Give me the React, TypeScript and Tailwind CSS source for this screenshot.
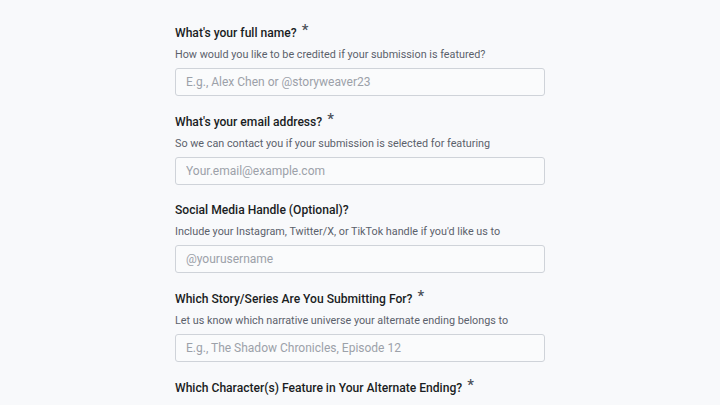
const fields = [
  {
    label: "What's your full name?",
    required: true,
    hint: "How would you like to be credited if your submission is featured?",
    placeholder: "E.g., Alex Chen or @storyweaver23",
  },
  {
    label: "What's your email address?",
    required: true,
    hint: "So we can contact you if your submission is selected for featuring",
    placeholder: "Your.email@example.com",
  },
  {
    label: "Social Media Handle (Optional)?",
    required: false,
    hint: "Include your Instagram, Twitter/X, or TikTok handle if you'd like us to",
    placeholder: "@yourusername",
  },
  {
    label: "Which Story/Series Are You Submitting For?",
    required: true,
    hint: "Let us know which narrative universe your alternate ending belongs to",
    placeholder: "E.g., The Shadow Chronicles, Episode 12",
  },
  {
    label: "Which Character(s) Feature in Your Alternate Ending?",
    required: true,
    hint: "List the main characters involved in your scenario",
    placeholder: "E.g., Mira, Captain Vance",
  },
];

export default function App() {
  return (
    <div className="w-full h-[405px] overflow-hidden bg-[#f8f9fb] font-['Roboto',sans-serif]">
      <form className="w-[370px] mx-auto pt-[24px] flex flex-col gap-[16.67px]">
        {fields.map((f) => (
          <div key={f.label} className="flex flex-col">
            {/* Label */}
            <label className="flex items-start whitespace-nowrap text-[12.1px] leading-[18px] font-medium text-[#1a1d23]">
              {f.label}
              {f.required && (
                <span className="ml-[5px] text-[15px] leading-[13px] text-[#4b5058]">*</span>
              )}
            </label>
            <p className="mt-[5px] whitespace-nowrap text-[10.8px] leading-[16px] text-[#5b616b]">
              {f.hint}
            </p>
            <input
              type="text"
              placeholder={f.placeholder}
              className="mt-[5px] h-[28px] w-full rounded-[3px] border border-[#cfd3d9] bg-[#fafbfc] px-[10px] text-[12px] text-[#1a1d23] placeholder:text-[#9ca1a9] outline-none"
            />
          </div>
        ))}
      </form>
    </div>
  );
}
